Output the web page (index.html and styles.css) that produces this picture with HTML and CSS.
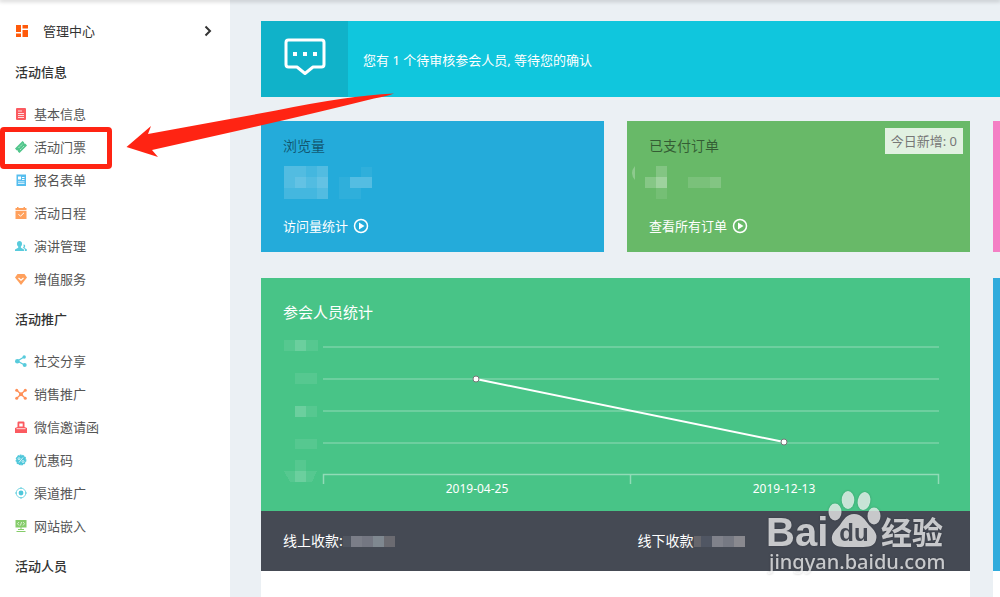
FILE: index.html
```html
<!DOCTYPE html>
<html lang="zh-CN">
<head>
    <meta charset="UTF-8">
    <meta name="viewport" content="width=device-width, initial-scale=1.0">
    <title>管理中心</title>
    <link rel="stylesheet" href="styles.css">
</head>
<body>

<div class="topbar"></div>

<div class="layout">
    <nav class="sidebar">
        <a class="home" href="#">
            <svg class="home-icon" viewBox="0 0 12 12" fill="#ff5a0a"><path d="M0 0h5v7H0zM6.500 0H12v3.500H6.500zM0 8.500h5V12H0zM6.500 5H12v7H6.500z"/></svg>
            <span>管理中心</span>
            <svg class="chevron" viewBox="0 0 8 12" fill="none" stroke="#333" stroke-width="2"><path d="M1.500 1.500L6 6l-4.500 4.500"/></svg>
        </a>

        <h2>活动信息</h2>
        <ul>
            <li><a href="#">
                <svg viewBox="0 0 12 12"><rect x="1" width="10" height="12" rx="1" fill="#fb5a60"/><path d="M3 3h4M3 5.500h6M3 7.500h6M3 9.500h6" stroke="#fff" stroke-width=".8"/></svg>
                基本信息</a></li>
            <li class="marked"><a href="#">
                <svg viewBox="0 0 12 12"><path d="M0 7.500L7.500 0l1.500 1.200.2 1.300 1.300.3L12 4.500 4.500 12 3 10.800l-.2-1.300-1.300-.3z" fill="#52c68c"/><path d="M3.500 7l4-4M5 9l4-4" stroke="#fff" stroke-width=".6" stroke-dasharray="1.500 .7"/></svg>
                活动门票</a></li>
            <li><a href="#">
                <svg viewBox="0 0 12 12"><rect x="1.500" y=".5" width="9.500" height="11.500" fill="#55bdee"/><path d="M3 2.500h3v3H3zM7 3h2.500v1H7zM7 5h2.500v1H7zM3 7.500h6.500v.8H3zM3 9.300h6.500v.8H3z" fill="#fff"/></svg>
                报名表单</a></li>
            <li><a href="#">
                <svg viewBox="0 0 12 12"><path d="M.5 1H2V0h1.500v1h5V0H10v1h1.500v2H.5zM.5 3.700h11V12H.5z" fill="#ffa05c"/><path d="M3.500 7.200l2 2L9 5.800" fill="none" stroke="#fff"/></svg>
                活动日程</a></li>
            <li><a href="#">
                <svg viewBox="0 0 12 12" fill="#58cbdc"><path d="M4.500 1C6 1 7 2 7 3.700 7 5 6.500 6 5.900 6.500v1.200L9 9.500V11H0V9.500l3.200-1.800V6.500C2.500 6 2 5 2 3.700 2 2 3 1 4.500 1z"/><path d="M8.500 4.500c1.500-.3 2.300 1.500 1.200 2.800v.8l2.100 1.200V11h-2V9L7.700 7.800l1-.8z"/></svg>
                演讲管理</a></li>
            <li><a href="#">
                <svg viewBox="0 0 12 12"><path d="M2.500 1h7L12 4.500 6 12 0 4.500z" fill="#ffa05c"/><path d="M3.500 5L6 7.300 8.500 5" fill="none" stroke="#fff" stroke-width="1.200"/></svg>
                增值服务</a></li>
        </ul>

        <h2>活动推广</h2>
        <ul>
            <li><a href="#">
                <svg viewBox="0 0 12 12" fill="#58cbdc"><path d="M9 2L2.500 6 9.500 10" fill="none" stroke="#58cbdc" stroke-width="1.300"/><circle cx="9.200" cy="2" r="1.700"/><circle cx="2.300" cy="6.200" r="2.300"/><circle cx="9.700" cy="10" r="2"/></svg>
                社交分享</a></li>
            <li><a href="#">
                <svg viewBox="0 0 12 12" fill="#ff8f57"><path d="M2 2.500l8 7.500M10 2.500L2 10" stroke="#ff8f57" stroke-width="1.300"/><circle cx="1.700" cy="2.200" r="1.500"/><circle cx="10.300" cy="2.200" r="1.500"/><circle cx="1.700" cy="10.200" r="1.500"/><circle cx="10.300" cy="10.200" r="1.500"/><circle cx="6" cy="6.200" r="2"/></svg>
                销售推广</a></li>
            <li><a href="#">
                <svg viewBox="0 0 12 12"><path d="M2.500 6V1.700Q2.500.5 3.700.5h4.600q1.200 0 1.200 1.200V6L12 7v5H0V7z" fill="#fb5a60"/><path d="M4.300 2.500h3.400v3H4.300z" fill="#fff"/><path d="M1.500 7.700h9" stroke="#fff" stroke-width=".8"/></svg>
                微信邀请函</a></li>
            <li><a href="#">
                <svg viewBox="0 0 12 12"><circle cx="6" cy="6" r="4.800" fill="#4fc7da" stroke="#4fc7da" stroke-dasharray="1.800 .8" stroke-width="1.200"/><path d="M4 8.500L8 3.500" stroke="#fff" stroke-width=".8"/><g fill="none" stroke="#fff" stroke-width=".7"><circle cx="4" cy="4.700" r="1"/><circle cx="8" cy="7.500" r="1"/></g></svg>
                优惠码</a></li>
            <li><a href="#">
                <svg viewBox="0 0 12 12"><circle cx="6" cy="6" r="4.800" fill="none" stroke="#58cbdc" stroke-width=".8"/><circle cx="6" cy="6" r="2.400" fill="#4fc7da"/><path d="M6 0v2M6 10v2M0 6h2M10 6h2" stroke="#58cbdc" stroke-width=".8"/></svg>
                渠道推广</a></li>
            <li><a href="#">
                <svg viewBox="0 0 12 12"><path d="M.5 0h11v7.500h-5V9H9v1H3V9h2.500V7.500h-5zM1.500 11h9v1h-9z" fill="#85cc6a"/><path d="M4 2L2.500 3.700 4 5.500M8 2l1.500 1.700L8 5.500M6.600 2L5.400 5.500" fill="none" stroke="#fff" stroke-width=".7"/></svg>
                网站嵌入</a></li>
        </ul>

        <h2>活动人员</h2>
    </nav>

    <main class="content">
        <section class="notice">
            <div class="notice-icon">
                <svg viewBox="0 0 42 38" fill="none" stroke="#fff" stroke-width="3"><path d="M4.500 2h33Q40 2 40 4.500v22q0 2.500-2.500 2.500H29l-8 6.500L13 29H4.500Q2 29 2 26.500v-22Q2 2 4.500 2z" stroke-linejoin="round"/><path d="M9 14h4v4H9zM19 14h4v4h-4zM29 14h4v4h-4z" fill="#fff" stroke="none"/></svg>
            </div>
            <p>您有 1 个待审核参会人员, 等待您的确认</p>
        </section>

        <div class="grid">
            <section class="card views">
                <h3>浏览量</h3>
                <svg class="mosaic" viewBox="0 0 90 36" fill="#fff" shape-rendering="crispEdges">
                    <path d="M1 1h44v33H1z" opacity=".15"/>
                    <path d="M1 1h22v11H1zM34 1h11v33H34zM1 12h44v11H1z" opacity=".08"/>
                    <path d="M12 12h11v11H12zM34 12h11v11H34z" opacity=".1"/>
                    <path d="M56 12h11v22H56zM67 23h11v11H67zM78 2h11v10H78z" opacity=".05"/>
                    <path d="M67 12h22v11H67z" opacity=".22"/>
                </svg>
                <a href="#">访问量统计
                    <svg viewBox="0 0 16 16"><circle cx="8" cy="8" r="6.500" fill="none" stroke="#fff" stroke-width="1.500"/><path d="M6 4.500L11.500 8 6 11.500z" fill="#fff"/></svg>
                </a>
            </section>

            <section class="card orders">
                <h3>已支付订单</h3>
                <span class="badge">今日新增: 0</span>
                <svg class="mosaic" viewBox="0 0 90 36" fill="#fff" shape-rendering="crispEdges">
                    <path d="M-14 1v14q-6-7 0-14z" opacity=".25" shape-rendering="auto"/>
                    <path d="M-4 12H7v11H-4z" opacity=".2"/>
                    <path d="M7 1h11v11H7z" opacity=".18"/>
                    <path d="M7 12h11v11H7z" opacity=".36"/>
                    <path d="M7 23h11v11H7z" opacity=".09"/>
                    <path d="M39 12h33v11H39z" opacity=".12"/>
                    <path d="M61 12h11v11H61z" opacity=".07"/>
                </svg>
                <a href="#">查看所有订单
                    <svg viewBox="0 0 16 16"><circle cx="8" cy="8" r="6.500" fill="none" stroke="#fff" stroke-width="1.500"/><path d="M6 4.500L11.500 8 6 11.500z" fill="#fff"/></svg>
                </a>
            </section>

            <section class="card pink"></section>

            <section class="panel">
                <div class="panel-chart">
                    <h3>参会人员统计</h3>
                    <svg class="chart" viewBox="0 0 709 176">
                        <g fill="#fff" shape-rendering="crispEdges">
                            <path d="M23 5h34v11H23zM34 38h22v11H34zM34 71h22v11H34zM34 104h22v10H34zM34 125h11v11H34zM23 136h33l-5 11H29z" opacity=".08"/>
                            <path d="M34 5h11v11H34zM34 71h11v11H34zM34 136h11v11H34z" opacity=".13"/>
                        </g>
                        <g stroke="#fff" stroke-width="2" opacity=".2">
                            <path d="M62 12h616M62 44h616M62 76h616M62 108h616"/>
                        </g>
                        <path d="M62.500 149v-9.500h615v9.500M369.500 140v9" fill="none" stroke="#fff" stroke-width="1.500" opacity=".4"/>
                        <path d="M215 44l308 63" stroke="#fff" stroke-width="2"/>
                        <g fill="#fff" stroke="#777">
                            <circle cx="215" cy="44" r="3"/>
                            <circle cx="523" cy="107" r="3"/>
                        </g>
                        <g class="axis-label">
                            <text x="216" y="158">2019-04-25</text>
                            <text x="523" y="158">2019-12-13</text>
                        </g>
                    </svg>
                </div>
                <div class="totals">
                    <div>线上收款:
                        <svg viewBox="0 0 56 12" shape-rendering="crispEdges"><path d="M0 1h8v11H0z" fill="#505661"/><path d="M8 1h11v11H8z" fill="#7b7e88"/><path d="M19 1h11v11H19z" fill="#747782"/><path d="M30 1h11v11H30z" fill="#7f8890"/><path d="M41 1h11v11H41z" fill="#6b6b71"/></svg>
                    </div>
                    <div>线下收款
                        <svg viewBox="0 0 56 12" shape-rendering="crispEdges"><path d="M0 1h7v11H0z" fill="#66666c"/><path d="M7 1h11v11H7z" fill="#505663"/><path d="M18 1h11v11H18z" fill="#80828b"/><path d="M29 1h11v11H29z" fill="#767983"/><path d="M40 1h11v11H40z" fill="#89898f"/></svg>
                    </div>
                </div>
                <svg class="watermark" viewBox="0 0 190 90">
                    <g fill="#fff" opacity=".72">
                        <text class="wm-bai" x="6" y="58">Bai</text>
                        <ellipse cx="75" cy="24" rx="6.500" ry="8.500"/>
                        <ellipse cx="88" cy="12" rx="6.300" ry="9"/>
                        <ellipse cx="104" cy="13" rx="6.300" ry="9" transform="rotate(12 104 13)"/>
                        <ellipse cx="114" cy="28" rx="6.500" ry="8.500"/>
                        <path d="M94 26c8 0 11 6 15 11 5 5 9 9 7 15-2 8-10 7-22 7s-20 1-22-7c-1-7 4-10 8-15 4-6 7-11 14-11z"/>
                        <text class="wm-cn" x="121" y="56">经验</text>
                        <text class="wm-url" x="9" y="81">jingyan.baidu.com</text>
                    </g>
                    <text class="wm-du" x="94" y="53">du</text>
                </svg>
            </section>

            <section class="panel">
                <div class="panel-blue"></div>
            </section>
        </div>
    </main>

    <svg class="arrow" viewBox="0 0 270 66"><path d="M0.500 54L25 33l-3 8L150 17.500Q220 3 268 .5q-6 2.500-20 5Q190 20 115 37L26 57l6 7z" fill="#ff2413"/></svg>
</div>

</body>
</html>
```

FILE: styles.css
```css
*, *::after {
    box-sizing: border-box;
}
body {
    margin: 0;
    background-color: #ebf0f4;
    font-family: "Noto Sans", "Noto Sans CJK SC", sans-serif;
    font-size: 13px;
    color: #555;
}
h2, h3, p, ul {
    margin: 0;
    padding: 0;
}
a {
    color: inherit;
    text-decoration: none;
}
.topbar {
    position: relative;
    z-index: 2;
    height: 0;
    box-shadow: 0 0 4px 1px rgba(0, 0, 0, 0.3);
}
.layout {
    position: relative;
    display: flex;
    min-height: 100vh;
    overflow: hidden;
}

/* Sidebar */
.sidebar {
    flex: 0 0 230px;
    background-color: #fff;
}
.home {
    display: flex;
    align-items: center;
    height: 48px;
    padding: 13px 18px 0 16px;
    color: #333;
}
.home-icon {
    width: 12px;
    height: 12px;
    margin-right: 15px;
}
.chevron {
    width: 8px;
    height: 12px;
    margin-left: auto;
}
.sidebar h2 {
    padding-left: 15px;
    font-size: 13px;
    font-weight: 500;
    line-height: 49px;
    color: #333;
}
.sidebar ul {
    list-style: none;
}
.sidebar li {
    position: relative;
}
.sidebar li a {
    display: flex;
    align-items: center;
    gap: 7px;
    height: 33px;
    padding-left: 15px;
}
.sidebar li svg {
    width: 12px;
    height: 12px;
}
.marked::after {
    content: "";
    position: absolute;
    top: -3px;
    left: 0;
    width: 112px;
    height: 42px;
    border: 5px solid #ff2413;
    border-radius: 4px;
}
.arrow {
    position: absolute;
    z-index: 1;
    top: 93px;
    left: 126px;
    width: 270px;
    height: 66px;
}

/* Content */
.content {
    flex: 1;
    display: flex;
    flex-direction: column;
    min-width: 0;
    padding: 21px 0 0 31px;
}
.notice {
    display: flex;
    align-items: center;
    height: 76px;
    margin-bottom: 24px;
    background-color: #10c6dd;
    color: #fff;
}
.notice-icon {
    display: flex;
    align-items: center;
    justify-content: center;
    width: 87px;
    height: 100%;
    margin-right: 15px;
    padding-bottom: 4px;
    background-color: #10b2c9;
}
.notice-icon svg {
    width: 42px;
    height: 38px;
}
.grid {
    flex: 1;
    display: grid;
    grid-template-columns: 1fr 1fr 7px;
    grid-template-rows: auto 1fr;
    gap: 26px 23px;
}
.card {
    position: relative;
    padding: 15px 22px 16px;
}
.card h3 {
    font-size: 14px;
    font-weight: normal;
    line-height: 20px;
    color: rgba(0, 0, 0, 0.5);
}
.card a {
    display: flex;
    align-items: center;
    gap: 5px;
    margin-top: 15px;
    line-height: 20px;
    color: #fff;
}
.card a svg {
    width: 16px;
    height: 16px;
}
.mosaic {
    display: block;
    width: 90px;
    height: 36px;
    margin-top: 9px;
    overflow: visible;
}
.views {
    background-color: #24abda;
}
.orders {
    background-color: #68b968;
}
.pink {
    padding: 0;
    background-color: #f47fc4;
}
.badge {
    position: absolute;
    top: 7px;
    right: 7px;
    padding: 0 6px;
    line-height: 26px;
    background-color: rgba(255, 255, 255, 0.8);
    color: #777;
}

/* Statistics */
.panel {
    position: relative;
    background-color: #fff;
}
.panel-chart {
    background-color: #48c487;
}
.card + .panel {
    grid-column: span 2;
}
.panel-chart h3 {
    padding: 23px 22px 12px;
    font-size: 15px;
    font-weight: normal;
    line-height: 22px;
    color: #fff;
}
.chart {
    display: block;
    width: 100%;
}
.axis-label {
    font-size: 12px;
    text-anchor: middle;
    fill: #fff;
}
.totals {
    display: grid;
    grid-template-columns: 1fr 1fr;
    background-color: #454a54;
    font-size: 14px;
    line-height: 60px;
    color: #fff;
}
.totals div {
    display: flex;
    align-items: center;
    padding-left: 22px;
}
.totals svg {
    width: 56px;
    height: 12px;
}
.panel-blue {
    height: 293px;
    background-color: #30abdc;
}

/* Watermark over the panel corner */
.watermark {
    position: absolute;
    right: 20px;
    top: 210px;
    width: 190px;
    height: 90px;
    filter: drop-shadow(0 0 1px rgba(0, 0, 0, 0.3));
}
.wm-bai {
    font: bold 40px "Liberation Sans", sans-serif;
}
.wm-cn {
    font: bold 31px "Noto Sans CJK SC", sans-serif;
}
.wm-url {
    font-size: 20px;
    font-weight: 500;
}
.wm-du {
    font: bold 24px "Liberation Sans", sans-serif;
    text-anchor: middle;
    fill: #454a54;
}
```
